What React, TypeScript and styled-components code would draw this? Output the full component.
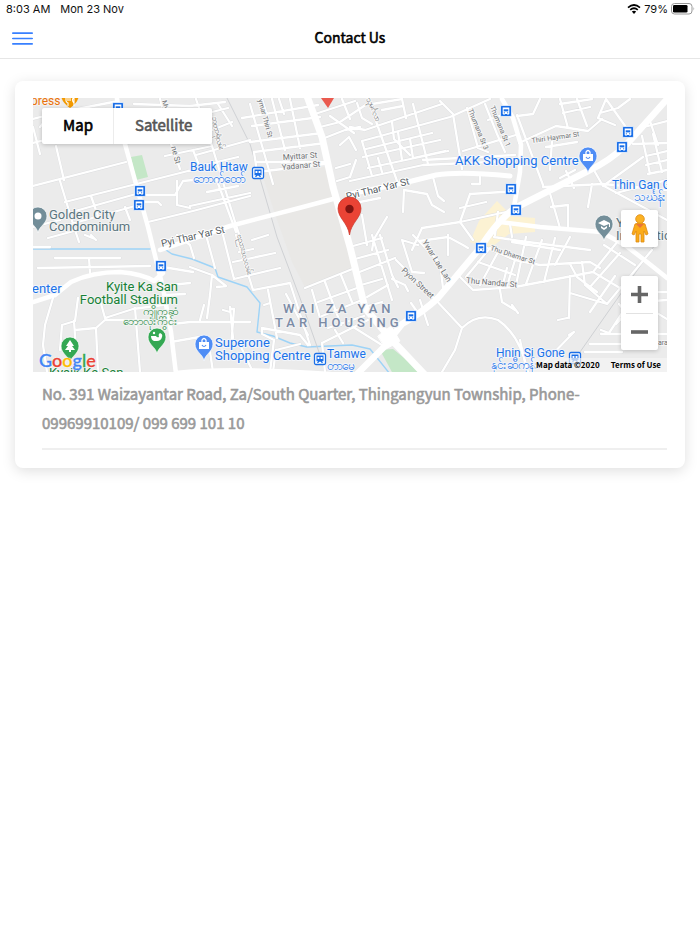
import React from 'react';
import styled, { createGlobalStyle } from 'styled-components';

const UI_FONT = '"Noto Sans CJK SC", "Noto Sans", sans-serif';
const MAP_FONT = 'Roboto, "Noto Sans", sans-serif';

const GlobalStyle = createGlobalStyle`
  *, *::before, *::after { box-sizing: border-box; }
  body { margin: 0; background: #fff; color: #000; font-family: ${UI_FONT}; }
  button { font: inherit; border: 0; padding: 0; background: none; cursor: pointer; }
`;

const StatusBar = styled.div`
  display: flex;
  align-items: center;
  justify-content: space-between;
  height: 18px;
  padding: 0 5px 0 6px;
  font: 400 11px/18px Inter, sans-serif;
  color: #111;
`;

const StatusGroup = styled.div<{ $gap: number }>`
  display: flex;
  align-items: center;
  gap: ${p => p.$gap}px;
`;

const Header = styled.header`
  display: grid;
  grid-template-columns: 48px 1fr 48px;
  align-items: center;
  height: 41px;
  border-bottom: 1px solid #e6e6e6;
`;

const MenuButton = styled.button`
  display: flex;
  align-items: center;
  justify-content: center;
  width: 45px;
  height: 40px;
`;

const Title = styled.h1`
  margin: 0;
  font-size: 14px;
  line-height: 38px;
  font-weight: 400;
  -webkit-text-stroke: 0.04em currentColor;
  text-align: center;
  align-self: start;
`;

const Main = styled.main`
  padding: 22px 15px;
`;

const Card = styled.section`
  padding: 17px 18px 18px;
  border-radius: 8px;
  background: #fff;
  box-shadow: 0 3px 14px rgba(0, 0, 0, 0.13);
`;

const MapFrame = styled.div`
  position: relative;
  height: 274px;
  overflow: hidden;
  background: #ebebeb;
`;

const MapSvg = styled.svg`
  display: block;
  width: 100%;
  height: 100%;
  font-family: ${MAP_FONT};
`;

const TypeSwitch = styled.div`
  position: absolute;
  top: 10px;
  left: 9px;
  display: flex;
  height: 36px;
  background: #fff;
  border-radius: 2px;
  box-shadow: 0 1px 4px rgba(0, 0, 0, 0.2);
`;

const TypeButton = styled.button<{ $active?: boolean }>`
  padding: 0 20px 3px 21px;
  font-size: 15px;
  font-weight: 400;
  color: ${p => (p.$active ? '#000' : '#565656')};
  -webkit-text-stroke: 0.04em currentColor;
  & + & { border-left: 1px solid #ececec; }
`;

const SideControls = styled.div`
  position: absolute;
  right: 9px;
  bottom: 22px;
  display: flex;
  flex-direction: column;
  gap: 29px;
`;

const ControlBox = styled.div`
  display: flex;
  flex-direction: column;
  align-items: center;
  width: 37px;
  background: #fff;
  border-radius: 2px;
  box-shadow: 0 1px 4px rgba(0, 0, 0, 0.2);
`;

const ControlButton = styled.button`
  display: flex;
  align-items: center;
  justify-content: center;
  width: 37px;
  height: 37px;
`;

const Separator = styled.div`
  width: 27px;
  height: 1px;
  margin-bottom: -1px;
  background: #e2e2e2;
`;

const Logo = styled.a`
  position: absolute;
  left: 6px;
  bottom: 1px;
  font: 500 18px/22px Lato, sans-serif;
  text-decoration: none;
  text-shadow: 0 0 1px #fff, 0 0 2px #fff;
`;

const LogoLetter = styled.span<{ $color: string }>`
  color: ${p => p.$color};
  -webkit-text-stroke: 0.02em currentColor;
`;

const Credits = styled.div`
  position: absolute;
  right: 0;
  bottom: 0;
  display: flex;
  gap: 11px;
  height: 14px;
  padding: 0 6px 0 3px;
  background: rgba(245, 245, 245, 0.7);
  font-size: 8px;
  line-height: 14px;
  font-weight: 700;
`;

const TermsLink = styled.a`
  color: #000;
  text-decoration: none;
`;

const Address = styled.address`
  margin-left: 9px;
  padding: 7px 0 11px;
  border-bottom: 2px solid #efefef;
  font-size: 15px;
  line-height: 29px;
  font-weight: 400;
  font-style: normal;
  color: #999;
  -webkit-text-stroke: 0.04em currentColor;
`;

/* Streets, drawn in the map's own coordinates. */
const lanes = `
M33 119L52 114L118 101 M33 143L118 122 M56 146L64 180 M33 127L40 154 M45 121L40 127
M33 186L126 162 M65 202L188 171L214 168 M60 181L73 224L79 242 M68 213L136 194 M71 224L135 206
M91 196L98 216 M125 207L130 220 M148 222L193 211L250 196 M145 195L175 195L183 181L193 180
M177 181L177 205L190 208 M141 202L158 202L161 205 M33 227L60 220 M48 238L74 231
M165 156L212 146 M171 144L180 169 M128 143L212 122 M134 104L190 106L225 102 M160 99L172 140
M196 99L212 146L236 225L243 246 M212 130L232 122 M212 112L228 108 M218 104L232 126
M196 155L250 140 M200 166L238 157 M193 150L200 168 M207 192L238 186 M190 206L250 193 M216 178L236 232
M242 118L318 105 M252 126L320 117 M250 142L322 133 M254 152L325 143 M256 162L324 162 M254 152L257 172L325 164
M250 104L273 184 M272 99L285 150 M290 99L300 148 M262 99L268 118 M279 99L284 114
M315 114L355 101 M320 127L340 122L370 102 M322 139L345 130L360 127 M330 116L354 133 M342 99L350 119 M340 145L349 137L356 150
M337 181L350 177L356 160 M336 168L350 164
M350 127L365 130L442 104 M357 103L362 118L372 124 M370 104L397 181 M413 104L428 164 M362 141L372 176
M362 141L450 117L490 99 M372 104L402 99L406 118 M382 110L403 106 M392 122L394 139L410 155 M440 101L453 114L462 169
M363 157L440 140 M366 149L432 133 M368 168L448 151 M378 158L382 172 M410 139L413 158L445 151 M398 132L402 160
M350 181L423 165L515 161 M423 160L515 155 M463 151L519 134 M467 108L478 148L488 152 M485 104L497 134L505 152
M488 120L510 112 M404 190L403 212 M404 190L427 194L432 205L444 212 M433 177L438 196L444 201 M387 217L374 239L372 250
M480 177L480 184L472 184 M470 194L518 191 M470 194L460 222L473 240 M422 228L460 222L506 212 M460 208L486 202 M422 228L412 250
M362 215L367 245 M355 203L380 198
M517 115L543 185 M540 99L533 114L517 116 M519 143L556 126L588 131L602 119 M560 99L568 128 M577 99L587 126
M560 104L592 99 M563 113L590 107 M546 147L577 142 M552 141L550 170 M606 99L598 118L615 125 M606 99L628 130
M600 113L618 108L630 99 M640 128L667 121 M650 121L658 145 M633 144L667 143 M642 136L650 174 M653 134L662 172
M646 156L667 151 M646 165L667 160 M648 174L667 170 M595 172L603 186L643 157 M560 178L575 170 M566 171L572 183
M543 187L603 184L667 190 M549 190L560 228 M592 184L588 207 M574 188L570 179 M551 207L568 205L568 228 M604 186L667 220 M616 193L667 180
M510 224L512 237 M498 212L495 235
M55 258L120 258 M38 268L150 266 M89 258L90 273 M33 247L50 247 M85 235L95 239 M91 235L96 240
M53 298L45 325L43 345L47 372 M78 298L75 321L62 325L60 350 M100 300L105 318L133 309L163 305
M75 330L96 328L98 372 M96 328L105 320L168 320 M135 308L140 372 M74 321L76 350 M161 286L190 283 M165 295L185 294
M163 267L193 272 M171 342L205 336 M177 235L190 245L194 258 M206 235L215 268 M190 267L212 275L210 295L207 318
M212 275L226 286L217 287 M173 324L190 322L250 322 M230 307L233 338 M223 310L230 312 M204 305L200 320 M230 309L234 309L231 348
M223 235L234 279L267 271 M236 235L253 290L290 283L310 345 M233 262L275 253 M250 275L280 268 M252 240L268 235 M239 252L253 249
M268 290L277 338 M262 328L300 335L308 345 M262 328L262 334L274 340 M286 294L308 335 M264 305L270 303 M274 340L270 372
M276 350L300 344 M276 350L273 372 M240 345L253 372 M208 338L213 372
M305 288L355 268 M312 290L322 325 M325 282L341 325 M341 275L352 302 M318 302L357 288 M322 316L362 300 M328 328L364 316
M322 343L368 320 M322 343L325 372 M335 330L343 343 M350 325L385 347
M353 246L382 238 M355 259L388 250 M357 273L395 258 M367 297L388 285 M361 285L382 279 M372 235L392 300
M380 235L392 275L398 287 M392 279L405 285L408 291 M368 306L382 302
M402 240L418 245 M402 240L412 272L424 273 M419 241L448 237 M448 235L448 255 M450 238L463 245L468 248
M413 235L440 263L443 288 M396 260L433 297L462 328L455 350L442 372 M462 328Q478 312 498 320Q520 335 528 372
M411 303L418 313 M420 300L428 325 M460 277L473 290L515 287L593 272L622 236 M500 290L502 302L515 310
M478 262L515 275 M485 247L515 260L540 265L590 262L600 268 M494 237L520 241L590 250 M466 277L490 248 M480 285L498 252 M502 288L507 268
M515 260L507 286 M526 237L516 285 M542 240L526 284 M555 238L544 282 M570 237L555 265 M512 242L560 250
M570 276L569 318 M570 293L607 304L652 250 M570 264L577 277L597 292 M582 262L585 285L607 304 M593 272L620 288 M590 312L615 276 M590 287L620 253
M604 245L635 265 M512 305L518 313 M569 335L574 332L543 364 M601 330L609 333L632 298 M601 334L667 334 M590 344L667 344
M585 352L622 352 M640 292L667 292 M640 302L667 300 M647 307L667 319 M619 304L632 320 M616 324L630 310
M520 340L527 372 M558 320L567 318`;

const mainStreets = `
M33 302L55 295L71 282Q92 272 120 272Q143 274 154 281L163 273
M117 99L125 144L136 184L148 227L163 288L171 332L176 374
M502 99L513 118L521 145L520 172L514 207
M500 222L540 227L601 232L625 245L647 262L667 278
M176 373Q230 367 330 374
M160 250L230 226L303 207L333 199`;

const river = 'M33 249H150 M166 250L172 254L192 259L215 268L218 277L247 287L260 303L257 332L273 336L290 343L307 347L352 345L370 349L390 374';

const MapPin = ({ x, y, color, children }: { x: number; y: number; color: string; children: React.ReactNode }) => (
  <g transform={`translate(${x} ${y})`}>
    <path d="M0 17C-1 10-9 8-9 0a9 9 0 0 1 18 0C9 8 1 10 0 17Z" fill={color} stroke="#fff" strokeWidth=".7" />
    {children}
  </g>
);

const Bag = () => (
  <g>
    <path d="M-5-2H5V5H-5Z" fill="#fff" />
    <path d="M-2-2V-4Q0-7 2-4V-2" fill="none" stroke="#fff" strokeWidth="1.3" />
    <path d="M-2 1Q0 4 2 1" fill="none" stroke="#4f8df5" strokeWidth="1.2" />
  </g>
);

const BusStop = ({ x, y }: { x: number; y: number }) => (
  <g transform={`translate(${x} ${y})`}>
    <rect x="-5.5" y="-5.5" width="11" height="11" rx="1.3" fill="#1a6fe8" stroke="#fff" strokeWidth=".7" />
    <path d="M-3.3-3.6H3.3V3H2.5V4H1.5V3H-1.5V4H-2.5V3H-3.3Z" fill="#fff" />
    <path d="M-2.3-1.7H2.3V.4H-2.3Z" fill="#1a6fe8" />
    <path d="M-2.2 1.8H-1.1M1.1 1.8H2.2" stroke="#1a6fe8" />
  </g>
);

const Station = ({ x, y }: { x: number; y: number }) => (
  <g transform={`translate(${x} ${y})`}>
    <rect x="-5.5" y="-5.5" width="11" height="11" rx="1.5" fill="#fff" stroke="#1a6fe8" strokeWidth="1.3" />
    <path d="M-3.5-3.5H3.5V2.3H2L3 4H1.7L.8 2.8H-.8L-1.7 4H-3L-2 2.3H-3.5Z" fill="#1a6fe8" />
    <path d="M-2.5-2H-.6V0H-2.5ZM.6-2H2.5V0H.6Z" fill="#fff" />
  </g>
);

type Label = { x: number; y: number; t: string; s?: number; r?: number; a?: 'start' | 'middle' | 'end' };
type LabelGroup = { color: string; halo: string; items: Label[] };

const labels: LabelGroup[] = [
  {
    color: '#1c73e8', halo: '#f3f6fb', items: [
      { x: 190, y: 171, t: 'Bauk Htaw', s: 12 }, { x: 193, y: 183, t: 'ဘောက်ထော်', s: 12 },
      { x: 455, y: 165, t: 'AKK Shopping Centre' },
      { x: 612, y: 189, t: 'Thin Gan G', s: 12 }, { x: 634, y: 201, t: 'သင်္ဃန်း', s: 12 },
      { x: 32, y: 293, t: 'enter' },
      { x: 215, y: 347, t: 'Superone' }, { x: 215, y: 360, t: 'Shopping Centre' },
      { x: 327, y: 358, t: 'Tamwe', s: 12 }, { x: 327, y: 370, t: 'တာမွေ', s: 12 },
      { x: 496, y: 357, t: 'Hnin Si Gone', s: 12 }, { x: 491, y: 369, t: 'နှင်းဆီကုန်း', s: 12 },
    ],
  },
  {
    color: '#188038', halo: '#f1f5f2', items: [
      { x: 178, y: 291, t: 'Kyite Ka San', a: 'end' }, { x: 178, y: 304, t: 'Football Stadium', a: 'end' },
      { x: 178, y: 315, t: 'ကျိုက္ကဆံ', s: 11, a: 'end' }, { x: 178, y: 325, t: 'ဘောလုံးကွင်း', s: 11, a: 'end' },
      { x: 49, y: 377, t: 'Kyaik Ka San' },
    ],
  },
  {
    color: '#5b7680', halo: '#f4f4f4', items: [
      { x: 49, y: 219, t: 'Golden City' }, { x: 49, y: 231, t: 'Condominium' },
      { x: 616, y: 227, t: 'Y' }, { x: 616, y: 240, t: 'Internatic' },
    ],
  },
  { color: '#e8710a', halo: '#f8f3ee', items: [{ x: 31, y: 105, t: 'press', s: 12 }] },
  {
    color: '#6e7174', halo: '#f6f6f6', items: [
      { x: 283, y: 160, t: 'Myittar St', s: 8, r: -4 }, { x: 282, y: 170, t: 'Yadanar St', s: 8, r: -5 },
      { x: 532, y: 143, t: 'Thiri Haymar St', s: 7, r: -8 },
      { x: 468, y: 110, t: 'Thumana St 3', s: 7, r: 68 }, { x: 490, y: 107, t: 'Thumana St 1', s: 7, r: 68 },
      { x: 258, y: 100, t: 'ymar Thiri St', s: 7, r: 75 }, { x: 171, y: 147, t: 'ne St', s: 8, r: 75 },
      { x: 162, y: 101, t: 'Mya', s: 7, r: 75 },
      { x: 366, y: 99, t: 'သုမင်္ဂလာ', s: 8, r: 65 }, { x: 212, y: 117, t: 'ဘူတာရုံလမ်း', s: 8, r: 78 },
      { x: 237, y: 235, t: 'ဗညားဒလလမ်း', s: 8, r: 75 },
      { x: 422, y: 242, t: 'Ywar Lae Lan', s: 8, r: 58 }, { x: 401, y: 271, t: 'Pyon Street', s: 8, r: 43 },
      { x: 490, y: 250, t: 'Thu Dhamar St', s: 7, r: 18 }, { x: 466, y: 283, t: 'Thu Nandar St', s: 8, r: 5 },
      { x: 658, y: 345, t: 'ara', s: 7 },
    ],
  },
  {
    color: '#555c62', halo: '#fff', items: [
      { x: 162, y: 247, t: 'Pyi Thar Yar St', s: 10, r: -13 }, { x: 347, y: 200, t: 'Pyi Thar Yar St', s: 10, r: -14 },
    ],
  },
];

const CityMap = () => (
  <MapSvg viewBox="33 98 634 274" preserveAspectRatio="xMidYMid slice" role="img" aria-label="Street map around Wai Za Yan Tar Housing">
    <rect x="-400" y="-200" width="1500" height="900" fill="#ebebeb" />
    <path d="M261 171L326 167L335 199L345 225L356 268L306 289L292 262L275 214Z" fill="#e9e8e6" />
    <path d="M131 157L142 155L148 177L136 180Z" fill="#c4e7c7" />
    <path d="M380 350L393 349L424 374H393Z" fill="#c4e7c7" />
    <path d="M470 242L479 221L497 201L506 210L509 216L535 218V232L509 234L489 249Z" fill="#fcf2d3" />
    <g fill="none" strokeLinejoin="round" strokeLinecap="round">
      <path d={river} stroke="#9dd3f7" strokeWidth="1.4" />
      <path d="M227 98L250 144L277 237L300 298L320 355L326 374 M657 242L573 362" stroke="#cfd1d4" strokeWidth="1" />
      <path d={lanes} stroke="#dcdddf" strokeWidth="3" />
      <path d={lanes} stroke="#fff" strokeWidth="2.3" />
      <path d={mainStreets} stroke="#fff" strokeWidth="4.5" />
      <path d="M350 194L412 181L436 175Q460 171 510 176" stroke="#fff" strokeWidth="5" />
      <path d="M307 96L322 137L333 187L350 247L365 308L390 338L426 376" stroke="#fff" strokeWidth="7" />
      <path d="M668 98L627 144Q610 161 588 171L517 207Q500 217 480 248L438 298Q423 312 402 324L383 348L357 374" stroke="#fff" strokeWidth="6.5" />
      <path d="M378 336L391 326L400 341L386 349Z" fill="#fff" stroke="#fff" />
    </g>
    {labels.map(group => (
      <g key={group.color} fill={group.color} stroke={group.halo} strokeWidth="2" paintOrder="stroke" strokeLinejoin="round">
        {group.items.map((l, i) => (
          <text key={i} fontSize={l.s ?? 13} textAnchor={l.a} transform={`translate(${l.x} ${l.y}) rotate(${l.r ?? 0})`}>{l.t}</text>
        ))}
      </g>
    ))}
    <g fill="#7b8ba5" stroke="#f1f2f4" strokeWidth="2" paintOrder="stroke" fontSize="13" fontWeight="500" letterSpacing="4">
      <text x="283" y="313">WAI ZA YAN</text>
      <text x="275" y="327">TAR HOUSING</text>
    </g>
    {[[118, 108], [140, 191], [139, 205], [161, 266], [506, 111], [511, 189], [516, 210], [481, 248], [411, 316], [628, 132], [622, 147]].map(([x, y]) => (
      <BusStop key={`${x}-${y}`} x={x} y={y} />
    ))}
    <Station x={258} y={173} />
    <Station x={320} y={359} />
    <Station x={575} y={358} />
    <MapPin x={588} y={156} color="#4f8df5"><Bag /></MapPin>
    <MapPin x={204} y={344} color="#4f8df5"><Bag /></MapPin>
    <MapPin x={38} y={216} color="#738e99"><circle r="3.5" fill="#fff" /></MapPin>
    <MapPin x={604} y={224} color="#738e99">
      <path d="M-6-1L0-4L6-1V3H5V0L0 2ZM-3 2L0 4L3 2V4L0 6L-3 4Z" fill="#fff" />
    </MapPin>
    <MapPin x={70} y={346} color="#34a853">
      <path d="M0-6L4 0H2L5 4H1V6H-1V4H-5L-2 0H-4Z" fill="#fff" />
    </MapPin>
    <MapPin x={157} y={337} color="#34a853">
      <path d="M-6-1H-1Q0 1 2 0Q1-3 3-4Q6-3 5 0Q4 4 0 4H-3Q-6 3-6-1Z" fill="#fff" />
      <circle cx="-3" cy="-4" r="1.2" fill="#fff" />
    </MapPin>
    <g transform="translate(70 94)">
      <path d="M-9 0Q-9 8 0 14Q9 8 9 0Z" fill="#f29900" />
      <path d="M-4 3V7Q-3 9-2 9V12M-2 3V7M0 3V7M4 3V12M4 3Q1 6 4 9" stroke="#fff" fill="none" strokeWidth="1.1" />
    </g>
    <path d="M321 98H334L328 108Z" fill="#ea5a4f" />
    <path d="M349.500 235C348 223 338 218 338 208.500a11.500 11.500 0 0 1 23 0C361 218 351 223 349.500 235Z" fill="#ea4335" stroke="#c8362b" strokeWidth=".7" />
    <circle cx="349.500" cy="209" r="4.200" fill="#811411" />
  </MapSvg>
);

const PegmanIcon = () => (
  <svg width="18" height="30" viewBox="0 0 18 30" aria-hidden="true">
    <path d="M4 10Q9 7 14 10L17 20L15 21L13 17V28H10V20H8V28H5V17L3 21L1 20Z" fill="#fbab18" stroke="#dd8a13" strokeWidth=".8" />
    <circle cx="9" cy="5" r="4.300" fill="#fbb224" stroke="#dd8a13" strokeWidth=".8" />
    <path d="M5 10H13L9 14Z" fill="#e9743a" />
  </svg>
);

const logoLetters: [string, string][] = [
  ['G', '#4285f4'], ['o', '#ea4335'], ['o', '#fbbc05'], ['g', '#4285f4'], ['l', '#34a853'], ['e', '#ea4335'],
];

export default function App() {
  return (
    <>
      <GlobalStyle />
      <StatusBar>
        <StatusGroup $gap={10}>
          <span>8:03 AM</span>
          <span>Mon 23 Nov</span>
        </StatusGroup>
        <StatusGroup $gap={3}>
          <svg width="14" height="10" viewBox="0 0 14 10" fill="none" stroke="#000" strokeWidth="1.700" aria-hidden="true">
            <path d="M1 3.600Q7-1.600 13 3.600M3.200 5.900Q7 2.600 10.800 5.900" />
            <path d="M4.800 7.600Q7 5.800 9.200 7.600L7 9.900Z" fill="#000" stroke="none" />
          </svg>
          <span>79%</span>
          <svg width="24" height="12" viewBox="0 0 24 12" aria-hidden="true">
            <rect x=".5" y=".5" width="20.500" height="10.500" rx="3" fill="none" stroke="#999" />
            <rect x="2" y="2" width="14.500" height="7.500" rx="1.300" fill="#000" />
            <path d="M22.500 4Q24 5.700 22.500 7.500Z" fill="#999" />
          </svg>
        </StatusGroup>
      </StatusBar>
      <Header>
        <MenuButton type="button" aria-label="Open menu">
          <svg width="21" height="13" viewBox="0 0 21 13" stroke="#3880ff" strokeWidth="1.700" strokeLinecap="round" aria-hidden="true">
            <path d="M.8 1.200H20.200M.8 6.500H20.200M.8 11.800H20.200" />
          </svg>
        </MenuButton>
        <Title>Contact Us</Title>
      </Header>
      <Main>
        <Card>
          <MapFrame>
            <CityMap />
            <TypeSwitch>
              <TypeButton type="button" $active>Map</TypeButton>
              <TypeButton type="button">Satellite</TypeButton>
            </TypeSwitch>
            <SideControls>
              <ControlBox>
                <ControlButton type="button" aria-label="Street View"><PegmanIcon /></ControlButton>
              </ControlBox>
              <ControlBox>
                <ControlButton type="button" aria-label="Zoom in">
                  <svg width="17" height="17" viewBox="0 0 17 17" aria-hidden="true"><path d="M6.700 0h3.600v6.700H17v3.600h-6.700V17H6.700v-6.700H0V6.700h6.700Z" fill="#666" /></svg>
                </ControlButton>
                <Separator />
                <ControlButton type="button" aria-label="Zoom out">
                  <svg width="17" height="4" viewBox="0 0 17 4" aria-hidden="true"><path d="M0 .200h17v3.600H0Z" fill="#666" /></svg>
                </ControlButton>
              </ControlBox>
            </SideControls>
            <Logo href="#map" aria-label="Google">
              {logoLetters.map(([letter, color], i) => <LogoLetter key={i} $color={color}>{letter}</LogoLetter>)}
            </Logo>
            <Credits>
              <span>Map data ©2020</span>
              <TermsLink href="#terms">Terms of Use</TermsLink>
            </Credits>
          </MapFrame>
          <Address>
            No. 391 Waizayantar Road, Za/South Quarter, Thingangyun Township, Phone-09969910109/ 099 699 101 10
          </Address>
        </Card>
      </Main>
    </>
  );
}
